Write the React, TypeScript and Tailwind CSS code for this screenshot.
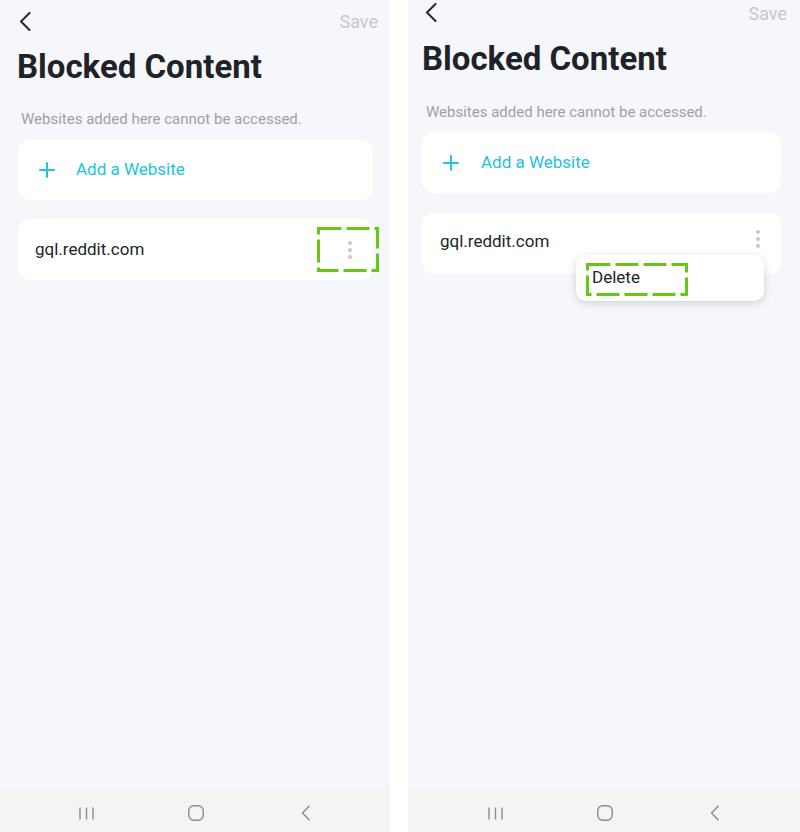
import React from "react";

const font = { fontFamily: "Roboto, 'Noto Sans', sans-serif" };

function BackChevron() {
  return (
    <svg width="12" height="19" viewBox="0 0 12 19" fill="none">
      <polyline points="10.5,1 2,9.5 10.5,18" stroke="#23272b" strokeWidth="2" strokeLinecap="round" strokeLinejoin="round" />
    </svg>
  );
}

function Plus() {
  return (
    <svg width="16" height="16" viewBox="0 0 16 16" fill="none">
      <path d="M8 1v14M1 8h14" stroke="#22c3dc" strokeWidth="2" strokeLinecap="round" />
    </svg>
  );
}

function Kebab() {
  return (
    <div className="flex flex-col items-center gap-[3px]">
      <span className="block h-[4px] w-[4px] rounded-full bg-[#c6c8cb]" />
      <span className="block h-[4px] w-[4px] rounded-full bg-[#c6c8cb]" />
      <span className="block h-[4px] w-[4px] rounded-full bg-[#c6c8cb]" />
    </div>
  );
}

function NavBar() {
  return (
    <div className="flex h-[44px] items-center justify-center gap-[90px] bg-[#f4f4f4] pt-[6px] pl-[2px]">
      <div className="flex w-[20px] justify-center">
        <svg width="15" height="13" viewBox="0 0 15 13" fill="none">
          <path d="M1 0.5v12M7.5 0.5v12M14 0.5v12" stroke="#8c8c8c" strokeWidth="1.4" />
        </svg>
      </div>
      <div className="flex w-[20px] justify-center">
        <svg width="16" height="16" viewBox="0 0 16 16" fill="none">
          <rect x="0.75" y="0.75" width="14.5" height="14.5" rx="5" stroke="#8c8c8c" strokeWidth="1.4" />
        </svg>
      </div>
      <div className="flex w-[20px] justify-center">
        <svg width="10" height="16" viewBox="0 0 10 16" fill="none">
          <polyline points="8.5,0.7 1.5,8 8.5,15.3" stroke="#8c8c8c" strokeWidth="1.4" strokeLinejoin="round" />
        </svg>
      </div>
    </div>
  );
}

function DashBox({ w, h }: { w: number; h: number }) {
  return (
    <svg width={w} height={h} viewBox={`0 0 ${w} ${h}`} fill="none">
      <rect x="1.5" y="1.5" width={w - 3} height={h - 3} stroke="#66c814" strokeWidth="3" strokeDasharray="23 5" />
    </svg>
  );
}

function LeftPanel() {
  return (
    <div className="relative flex h-[832px] w-[390px] shrink-0 flex-col bg-[#f6f7fb]">
      <div className="flex-1">
        <div className="flex h-[42px] items-center justify-between pl-[19px] pr-[12px]">
          <BackChevron />
          <span className="text-[18px] text-[#c5c8cc]">Save</span>
        </div>
        <div className="mt-[5px] pl-[17px] text-[33px] font-bold leading-[40px] text-[#1e2328]">Blocked Content</div>
        <div className="mt-[22px] pl-[21px] text-[15px] leading-[20px] text-[#9ea1a6]">
          Websites added here cannot be accessed.
        </div>
        <div className="ml-[18px] mr-[17px] mt-[11px] flex h-[60px] items-center rounded-[12px] bg-white pl-[21px]">
          <Plus />
          <span className="ml-[21px] text-[17px] text-[#22c3dc]">Add a Website</span>
        </div>
        <div className="ml-[18px] mr-[17px] mt-[19px] flex h-[61px] items-center justify-between rounded-[12px] bg-white pl-[17px] pr-[21px]">
          <span className="text-[17px] text-[#222528]">gql.reddit.com</span>
          <Kebab />
        </div>
      </div>
      <NavBar />
      <div className="absolute left-[317px] top-[227px]">
        <DashBox w={62} h={45} />
      </div>
    </div>
  );
}

function RightPanel() {
  return (
    <div className="relative flex h-[832px] w-[392px] shrink-0 flex-col bg-[#f6f7fb]">
      <div className="flex-1">
        <div className="flex h-[24px] items-center justify-between pl-[17px] pr-[13px]">
          <BackChevron />
          <span className="mt-[2px] text-[18px] text-[#c5c8cc]">Save</span>
        </div>
        <div className="mt-[15px] pl-[14px] text-[33px] font-bold leading-[40px] text-[#1e2328]">Blocked Content</div>
        <div className="mt-[23px] pl-[18px] text-[15px] leading-[20px] text-[#9ea1a6]">
          Websites added here cannot be accessed.
        </div>
        <div className="ml-[14px] mr-[19px] mt-[10px] flex h-[61px] items-center rounded-[12px] bg-white pl-[21px]">
          <Plus />
          <span className="ml-[22px] text-[17px] text-[#22c3dc]">Add a Website</span>
        </div>
        <div className="ml-[14px] mr-[19px] mt-[20px] flex h-[61px] items-center justify-between rounded-[12px] bg-white pb-[3px] pl-[18px] pr-[21px]">
          <span className="text-[17px] text-[#222528]">gql.reddit.com</span>
          <div className="-mt-[6px]">
            <Kebab />
          </div>
        </div>
      </div>
      <NavBar />
      <div className="absolute left-[168px] top-[255px] flex h-[46px] w-[188px] items-center rounded-[10px] bg-white pl-[16px] shadow-[0_2px_8px_rgba(0,0,0,0.16)]">
        <span className="text-[17px] text-[#222528]">Delete</span>
      </div>
      <div className="absolute left-[178px] top-[263px]">
        <DashBox w={102} h={33} />
      </div>
    </div>
  );
}

export default function App() {
  return (
    <div className="flex h-[832px] w-[800px] gap-[18px] overflow-hidden bg-white" style={font}>
      <LeftPanel />
      <RightPanel />
    </div>
  );
}
